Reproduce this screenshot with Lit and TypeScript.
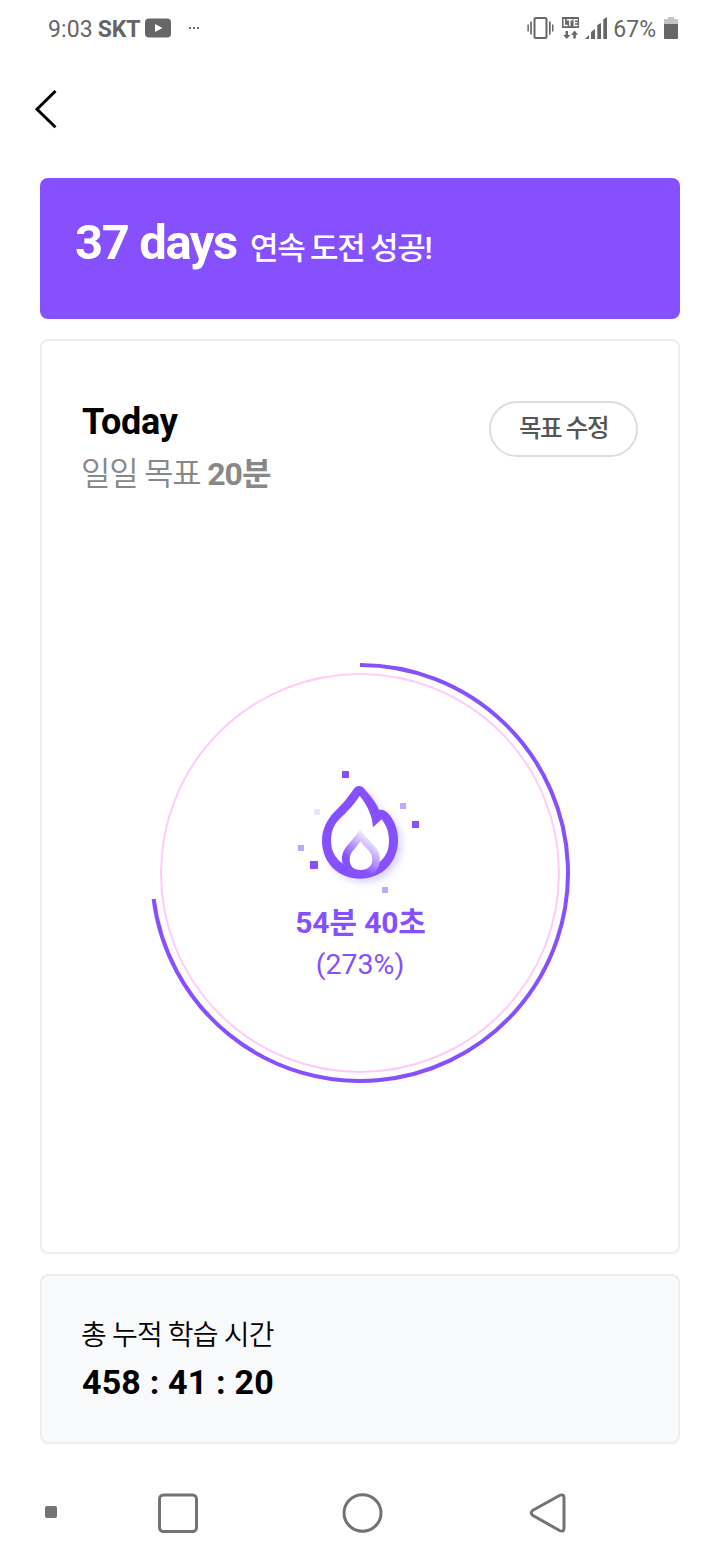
import { LitElement, html, css, svg } from "lit";
import { customElement, property } from "lit/decorators.js";

@customElement("status-bar")
class StatusBar extends LitElement {
  static styles = css`
    :host { display: flex; justify-content: space-between; height: 56px; padding: 0 40px 0 48px; color: #666; font-size: 23px; line-height: 60px; }
    .side { display: flex; align-items: flex-start; }
    .clock { letter-spacing: 0.1px; }
    .carrier { font-weight: 700; margin-left: 5px; letter-spacing: -0.1px; }
    svg { display: block; fill: #666; }
  `;
  render() {
    return html`
      <div class="side">
        <span class="clock">9:03</span><span class="carrier">SKT</span>
        <svg width="60" height="56" viewBox="0 0 60 56">
          <rect x="4" y="18.500" width="26" height="19" rx="4"/>
          <path d="M14 24l7.500 4-7.500 4z" fill="#fff"/>
          <path d="M48 27h2v2h-2zM52 27h2v2h-2zM56 27h2v2h-2z"/>
        </svg>
      </div>
      <div class="side">
        <svg width="86" height="56" viewBox="527 0 86 56">
          <rect x="534.500" y="18" width="12" height="20" rx="1.500" fill="none" stroke="#666" stroke-width="2"/>
          <path d="M530.200 21.500h1.700v13h-1.700zM527.400 24.500h1.500v7h-1.500zM549 21.500h1.700v13h-1.700zM552 24.500h1.500v7h-1.500z"/>
          <path d="M562 17h17v11h-17z"/>
          <path d="M564.300 19v6.500h3.400M566.800 19.700h5.800M569.800 19.700v6.500M577.800 19.700h-3.600v5.800h3.600M574.200 22.600h3.200" fill="none" stroke="#fff" stroke-width="1.400"/>
          <path d="M565.500 31h2.500v4h2.300l-3.500 4-3.600-4h2.300zM573.300 38.500h2.500v-3.700h2.200l-3.400-4.300-3.500 4.300h2.200z"/>
          <path d="M585 39l4-4v4zM591 39v-7l4-3v10zM597.300 39V25l3.700-2v16zM603.300 39V19.500l3.700-2.500v22z"/>
        </svg>
        <span>67%</span>
        <svg width="24" height="56" viewBox="656 0 24 56">
          <path d="M668 17h6v2h4v5h-14v-5h4z" fill="#c4c4c4"/><path d="M664 24h14v14q0 1-1 1h-12q-1 0-1-1z"/>
        </svg>
      </div>`;
  }
}

@customElement("flame-icon")
class FlameIcon extends LitElement {
  static styles = css`:host, svg { display: block; }`;
  render() {
    const sparks: [number, number, number, number][] = [
      [186, 48, 21, 1], [102, 162, 18, 0.16], [360, 144, 18, 0.5], [396, 198, 21, 1],
      [54, 270, 18, 0.5], [90, 318, 24, 1], [306, 396, 18, 0.5],
    ];
    const outer = "M237 93C245 93 250 97 256 105C275 127 291 147 297 165C308 162 318 167 327 178C345 200 354 225 354 257C354 322 305 371 240 371C175 371 126 322 126 257C126 225 140 195 163 171C187 148 200 133 221 102C226 96 231 93 237 93Z";
    return html`<svg width="160" height="150" viewBox="0 0 480 450">
      <defs>
        <filter id="glow" x="-20%" y="-20%" width="150%" height="150%"><feDropShadow dx="12" dy="12" stdDeviation="9" flood-color="#7060ff" flood-opacity=".25"/></filter>
        <linearGradient id="fade" gradientUnits="userSpaceOnUse" x1="205" y1="310" x2="265" y2="235">
          <stop offset="0" stop-color="#8650ff"/><stop offset="1" stop-color="#fbf8ff"/>
        </linearGradient>
      </defs>
      <path filter="url(#glow)" fill="#8650ff" d=${outer}/>
      <path fill="#fff" d="M239 122C222 150 205 165 181 190C162 207 153 230 153 257C153 285 165 308 187 325C200 339 220 345 240 345C265 345 287 338 300 320C318 303 327 285 327 257C327 230 318 210 305 193L279 217C277 185 265 155 239 122Z"/>
      <path fill="url(#fade)" fill-rule="evenodd" d="M240 223C258 248 275 260 289 279C305 304 302 329 289 346C278 360 261 366 242 366C210 366 186 345 186 312C186 278 214 264 240 223ZM242 258C229 280 209 289 209 314C209 334 222 345 242 345C264 345 277 333 277 313C277 290 257 282 242 258Z"/>
      ${sparks.map(([x, y, s, o]) => svg`<rect x=${x} y=${y} width=${s} height=${s} fill="#8650ff" fill-opacity=${o}/>`)}
    </svg>`;
  }
}

@customElement("goal-ring")
class GoalRing extends LitElement {
  @property({ type: Number }) percent = 0;
  static styles = css`
    :host { display: grid; width: 420px; height: 420px; }
    .ring, .content { grid-area: 1 / 1; display: block; }
    .content { display: flex; flex-direction: column; align-items: center; padding-top: 92px; color: #8650ff; }
    .time { font-size: 30px; font-weight: 700; line-height: 42px; margin: -3px 0 0 1px; letter-spacing: -0.150px; }
    .pct { font-size: 28.500px; line-height: 42px; }
  `;
  render() {
    const a = ((this.percent % 100) / 100) * Math.PI * 2;
    const x = 210 + 208 * Math.sin(a);
    const y = 210 - 208 * Math.cos(a);
    return html`
      <svg class="ring" width="420" height="420" fill="none">
        <circle cx="210" cy="210" r="199" stroke="#ffccfa" stroke-width="2"/>
        <path d="M210 2A208 208 0 ${a > Math.PI ? 1 : 0} 1 ${x} ${y}" stroke="#8650ff" stroke-width="4"/>
      </svg>
      <div class="content">
        <flame-icon></flame-icon>
        <div class="time">54분 40초</div>
        <div class="pct">(${this.percent}%)</div>
      </div>`;
  }
}

@customElement("nav-bar")
class NavBar extends LitElement {
  static styles = css`:host { display: block; height: 116px; } svg { display: block; }`;
  render() {
    return html`<svg width="720" height="116" viewBox="0 1444 720 116" fill="none" stroke="#737373" stroke-width="3">
      <rect x="45" y="1506" width="12" height="12" rx="2" fill="#737373" stroke="none"/>
      <rect x="159.500" y="1495" width="37" height="36.500" rx="4"/>
      <ellipse cx="362.500" cy="1513" rx="18.500" ry="18.200"/>
      <path d="M532.500 1510.500L559.500 1495.500Q564 1493.500 564 1498V1528Q564 1532.500 559.500 1530.500L532.500 1515.200Q530 1512.800 532.500 1510.500Z" stroke-linejoin="round"/>
    </svg>`;
  }
}

@customElement("app-root")
class AppRoot extends LitElement {
  static styles = css`
    :host { display: flex; flex-direction: column; width: 720px; height: 1560px; overflow: hidden; background: #fff; color: #000; font-family: Roboto, "Noto Sans CJK KR", sans-serif; }
    .header { height: 122px; box-sizing: border-box; padding: 32px 0 0 32px; }
    .header svg { display: block; }
    main { display: flex; flex-direction: column; gap: 20px; padding: 0 40px; }
    section { box-sizing: border-box; border-radius: 8px; }
    .banner { height: 141px; padding: 35px 35px 0; background: #8650ff; color: #fff; display: flex; align-items: baseline; line-height: 60px; }
    .days { font-size: 49px; font-weight: 700; letter-spacing: -1.400px; }
    .streak { font-size: 31px; font-weight: 500; margin-left: 13px; letter-spacing: -1.300px; word-spacing: -0.800px; }
    .today { height: 915px; border: 2px solid #ededed; padding: 60px 40px 0; display: flex; flex-direction: column; align-items: center; }
    .top { display: flex; justify-content: space-between; align-self: stretch; height: 262px; align-items: flex-start; }
    h1 { margin: 0; font-size: 36px; font-weight: 700; line-height: 42px; letter-spacing: -0.300px; }
    .goal { color: #888; font-size: 32px; line-height: 46px; margin: 8px 0 0 -1px; font-weight: 350; letter-spacing: -1.200px; }
    .goal b { font-weight: 700; letter-spacing: -0.900px; }
    button { box-sizing: border-box; width: 149px; height: 56px; border: 2px solid #ddd; border-radius: 28px; background: #fff; padding: 0; color: #555; font: 500 24.500px/50px Roboto, "Noto Sans CJK KR", sans-serif; letter-spacing: -1.400px; }
    .total { height: 170px; border: 2px solid #ededed; background: #f8f9fb; padding: 38px 40px 0; }
    .label { font-size: 28px; line-height: 44px; letter-spacing: -0.820px; font-weight: 350; margin-left: -1px; }
    .sum { font-size: 34px; font-weight: 700; line-height: 48px; letter-spacing: 0.180px; }
  `;
  render() {
    return html`
      <status-bar></status-bar>
      <div class="header"><svg width="28" height="42" viewBox="32 88 28 42"><path d="M55.500 91L37 109.200L55.500 127.300" fill="none" stroke="#000" stroke-width="3"/></svg></div>
      <main>
        <section class="banner"><span class="days">37 days</span><span class="streak">연속 도전 성공!</span></section>
        <section class="today">
          <div class="top">
            <div><h1>Today</h1><div class="goal">일일 목표 <b>20분</b></div></div>
            <button>목표 수정</button>
          </div>
          <goal-ring percent="273"></goal-ring>
        </section>
        <section class="total"><div class="label">총 누적 학습 시간</div><div class="sum">458 : 41 : 20</div></section>
      </main>
      <nav-bar></nav-bar>`;
  }
}
